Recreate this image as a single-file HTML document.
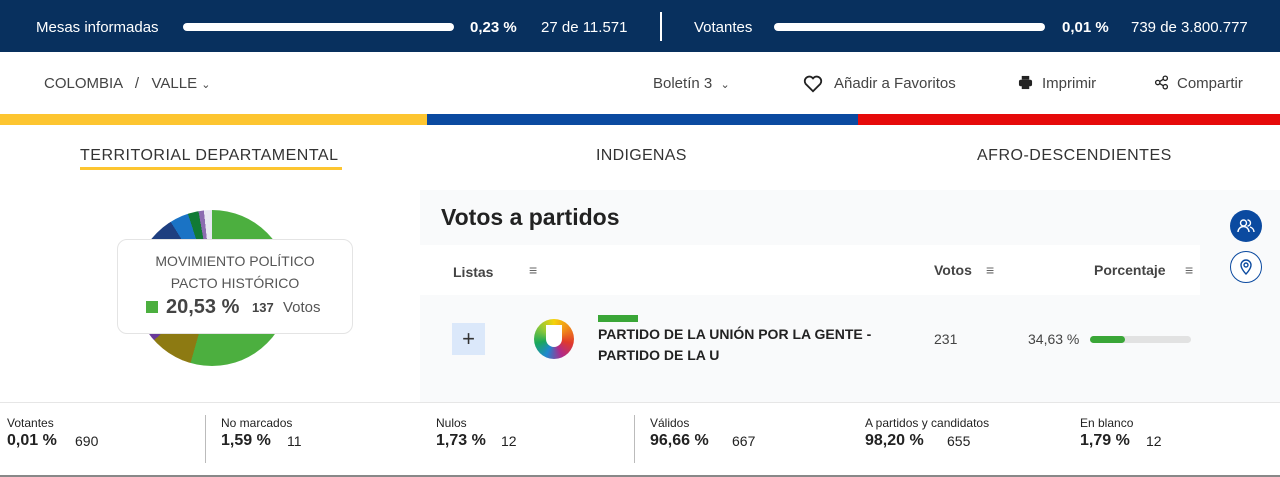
<!DOCTYPE html><html><head><meta charset="utf-8"><style>
body{margin:0;width:1280px;height:476px;overflow:hidden;font-family:"Liberation Sans",sans-serif;background:#fff;position:relative;color:#333}
.a{position:absolute;white-space:nowrap}
.top{position:absolute;left:0;top:0;width:1280px;height:52px;background:#08305e;color:#fff;font-size:15px}
.bar{position:absolute;height:8px;background:#fff;border-radius:4px;top:23px}
.b{font-weight:bold}
.sm{font-size:12px;color:#222}
.big{font-size:16px;font-weight:bold;color:#222}
</style></head><body>
<div class="top">
<div class="a" style="left:36px;top:19px">Mesas informadas</div>
<div class="bar" style="left:183px;width:271px"></div>
<div class="a b" style="left:470px;top:19px">0,23 %</div>
<div class="a" style="left:541px;top:19px">27 de 11.571</div>
<div class="a" style="left:660px;top:12px;width:2px;height:29px;background:#fff"></div>
<div class="a" style="left:694px;top:19px">Votantes</div>
<div class="bar" style="left:774px;width:271px"></div>
<div class="a b" style="left:1062px;top:19px">0,01 %</div>
<div class="a" style="left:1131px;top:19px">739 de 3.800.777</div>
</div>
<div class="a" style="left:44px;top:75px;font-size:15px;color:#444">COLOMBIA &nbsp;&nbsp;/&nbsp;&nbsp; VALLE <span style="font-size:11px">&#8964;</span></div>
<div class="a" style="left:653px;top:75px;font-size:15px;color:#444">Boletín 3 &nbsp;<span style="font-size:11px">&#8964;</span></div>
<svg class="a" style="left:802px;top:72px" width="22" height="22" viewBox="0 0 24 24"><path d="M12 21l-8-8a5 5 0 017-7l1 1 1-1a5 5 0 017 7z" fill="none" stroke="#222" stroke-width="2"/></svg>
<div class="a" style="left:834px;top:75px;font-size:15px;color:#444">Añadir a Favoritos</div>
<svg class="a" style="left:1018px;top:75px" width="15" height="15" viewBox="0 0 16 16"><rect x="4" y="1" width="8" height="4" fill="#222"/><rect x="1" y="5" width="14" height="7" rx="2" fill="#222"/><rect x="4" y="10" width="8" height="5" fill="#222"/></svg>
<div class="a" style="left:1042px;top:75px;font-size:15px;color:#444">Imprimir</div>
<svg class="a" style="left:1154px;top:75px" width="15" height="15" viewBox="0 0 16 16" fill="none" stroke="#222" stroke-width="1.4"><circle cx="4" cy="8" r="2.3"/><circle cx="12" cy="3.5" r="2.3"/><circle cx="12" cy="12.5" r="2.3"/><path d="M6 7l4-2.5M6 9l4 2.5"/></svg>
<div class="a" style="left:1177px;top:75px;font-size:15px;color:#444">Compartir</div>
<div class="a" style="left:0;top:114px;width:427px;height:11px;background:#fdc530"></div>
<div class="a" style="left:427px;top:114px;width:431px;height:11px;background:#0b4aa0"></div>
<div class="a" style="left:858px;top:114px;width:422px;height:11px;background:#e60a0a"></div>
<div class="a" style="left:80px;top:147px;font-size:16px;color:#333;letter-spacing:.5px">TERRITORIAL DEPARTAMENTAL</div>
<div class="a" style="left:80px;top:167px;width:262px;height:3px;background:#fdc530"></div>
<div class="a" style="left:596px;top:147px;font-size:16px;color:#333;letter-spacing:.3px">INDIGENAS</div>
<div class="a" style="left:977px;top:147px;font-size:16px;color:#333;letter-spacing:.5px">AFRO-DESCENDIENTES</div>
<div class="a" style="left:420px;top:190px;width:860px;height:212px;background:#f9fafb"></div>
<div class="a" style="left:420px;top:245px;width:780px;height:50px;background:#fff"></div>
<div class="a" style="left:134px;top:210px;width:156px;height:156px;border-radius:50%;background:conic-gradient(#4caf3f 0 196deg,#8d7a12 196deg 228deg,#6a3a9a 228deg 300deg,#1e3f80 300deg 328deg,#1a73c5 328deg 342deg,#117a35 342deg 350deg,#8b6bb0 350deg 354deg,#e8e8f2 354deg 360deg)"></div>
<div class="a" style="left:117px;top:239px;width:234px;height:93px;background:#fff;border:1px solid #e4e4e4;border-radius:10px"></div>
<div class="a" style="left:117px;top:250px;width:236px;text-align:center;font-size:14px;color:#555;line-height:22px">MOVIMIENTO POLÍTICO<br>PACTO HISTÓRICO</div>
<div class="a" style="left:146px;top:301px;width:12px;height:12px;background:#4caf3f"></div>
<div class="a" style="left:166px;top:296px;font-size:20px;font-weight:bold;color:#444">20,53 %</div>
<div class="a" style="left:252px;top:300px;font-size:13px;font-weight:bold;color:#444">137</div>
<div class="a" style="left:283px;top:299px;font-size:15px;color:#555">Votos</div>
<div class="a" style="left:441px;top:204px;font-size:23px;font-weight:bold;color:#222">Votos a partidos</div>
<div class="a" style="left:453px;top:264px;font-size:14px;font-weight:bold;color:#444">Listas</div>
<div class="a" style="left:529px;top:262px;font-size:14px;color:#666">≡</div>
<div class="a" style="left:934px;top:262px;font-size:14px;font-weight:bold;color:#444">Votos</div>
<div class="a" style="left:986px;top:262px;font-size:14px;color:#666">≡</div>
<div class="a" style="left:1094px;top:262px;font-size:14px;font-weight:bold;color:#444">Porcentaje</div>
<div class="a" style="left:1185px;top:262px;font-size:14px;color:#666">≡</div>
<div class="a" style="left:1230px;top:210px;width:32px;height:32px;border-radius:50%;background:#0b4aa0"></div>
<svg class="a" style="left:1236px;top:216px" width="20" height="20" viewBox="0 0 20 20" fill="none" stroke="#fff" stroke-width="1.4"><circle cx="7.5" cy="7" r="3"/><path d="M2 16a5.5 5.5 0 0111 0"/><path d="M11.5 4a3 3 0 010 6M14 11a5.5 5.5 0 014 5"/></svg>
<div class="a" style="left:1230px;top:251px;width:30px;height:30px;border-radius:50%;border:1px solid #0b4aa0;background:#fff"></div>
<svg class="a" style="left:1238px;top:258px" width="16" height="17" viewBox="0 0 16 17" fill="none" stroke="#0b4aa0" stroke-width="1.4"><path d="M8 16s-5-5-5-9a5 5 0 0110 0c0 4-5 9-5 9z"/><circle cx="8" cy="7" r="2"/></svg>
<div class="a" style="left:452px;top:323px;width:33px;height:32px;background:#dbe8fa;text-align:center;line-height:31px;font-size:22px;color:#333">+</div>
<div class="a" style="left:534px;top:319px;width:40px;height:40px;border-radius:50%;background:conic-gradient(#f5d20a,#f08a1a,#e03a2a,#b02a8a,#1e88d0,#1aa85a,#8cc83a,#f5d20a)"></div>
<div class="a" style="left:546px;top:325px;width:16px;height:22px;background:#fff;border-radius:0 0 8px 8px"></div>
<div class="a" style="left:598px;top:315px;width:40px;height:7px;background:#3aa637"></div>
<div class="a" style="left:598px;top:324px;font-size:14px;font-weight:bold;color:#222;line-height:21px">PARTIDO DE LA UNIÓN POR LA GENTE -<br>PARTIDO DE LA U</div>
<div class="a" style="left:934px;top:331px;font-size:14px;color:#444">231</div>
<div class="a" style="left:1028px;top:331px;font-size:14px;color:#444">34,63 %</div>
<div class="a" style="left:1090px;top:336px;width:101px;height:7px;border-radius:4px;background:#e2e2e2"></div>
<div class="a" style="left:1090px;top:336px;width:35px;height:7px;border-radius:4px;background:#3aa637"></div>
<div class="a" style="left:0;top:402px;width:1280px;height:72px;background:#fff;border-top:1px solid #e6e6e6;border-bottom:2px solid #888"></div>
<div class="a" style="left:205px;top:415px;width:1px;height:48px;background:#bbb"></div>
<div class="a" style="left:634px;top:415px;width:1px;height:48px;background:#bbb"></div>
<div class="a sm" style="left:7px;top:416px">Votantes</div><div class="a big" style="left:7px;top:432px">0,01 %</div><div class="a sm" style="left:75px;top:433px;font-size:14px">690</div>
<div class="a sm" style="left:221px;top:416px">No marcados</div><div class="a big" style="left:221px;top:432px">1,59 %</div><div class="a sm" style="left:287px;top:433px;font-size:14px">11</div>
<div class="a sm" style="left:436px;top:416px">Nulos</div><div class="a big" style="left:436px;top:432px">1,73 %</div><div class="a sm" style="left:501px;top:433px;font-size:14px">12</div>
<div class="a sm" style="left:650px;top:416px">Válidos</div><div class="a big" style="left:650px;top:432px">96,66 %</div><div class="a sm" style="left:732px;top:433px;font-size:14px">667</div>
<div class="a sm" style="left:865px;top:416px">A partidos y candidatos</div><div class="a big" style="left:865px;top:432px">98,20 %</div><div class="a sm" style="left:947px;top:433px;font-size:14px">655</div>
<div class="a sm" style="left:1080px;top:416px">En blanco</div><div class="a big" style="left:1080px;top:432px">1,79 %</div><div class="a sm" style="left:1146px;top:433px;font-size:14px">12</div>
</body></html>
